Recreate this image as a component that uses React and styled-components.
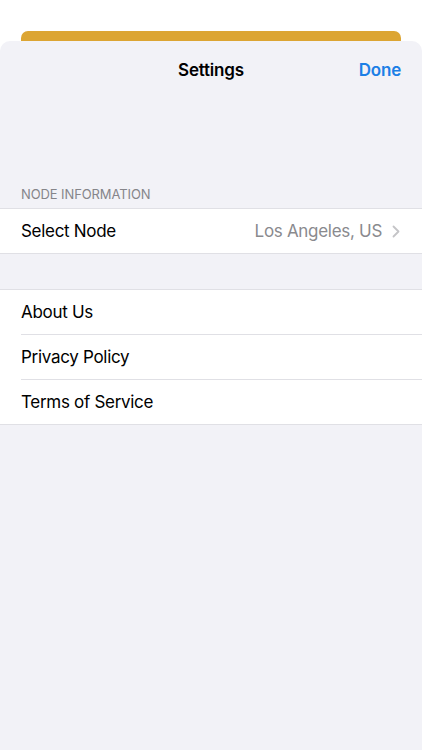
import React from 'react';
import styled, { createGlobalStyle } from 'styled-components';

const GlobalStyle = createGlobalStyle`
    html, body {
        margin: 0;
        padding: 0;
        background: #ffffff;
        font-family: Inter, "Liberation Sans", sans-serif;
        -webkit-font-smoothing: antialiased;
    }
`;

const Page = styled.div`
    width: 422px;
    height: 750px;
    padding-top: 31px;
    box-sizing: border-box;
    display: flex;
    flex-direction: column;
    overflow: hidden;
    background: #ffffff;
`;

const BackCard = styled.div`
    height: 10px;
    margin: 0 21px;
    background: #dca533;
    border-radius: 7px 7px 0 0;
    flex-shrink: 0;
`;

const Sheet = styled.div`
    flex: 1;
    background: #f2f2f7;
    border-radius: 10px 10px 0 0;
    display: flex;
    flex-direction: column;
`;

const NavBar = styled.div`
    height: 58px;
    display: grid;
    grid-template-columns: 1fr auto 1fr;
    align-items: center;
    padding: 0 21px;
`;

const Title = styled.div`
    grid-column: 2;
    font-size: 17px;
    font-weight: 600;
    color: #000;
    letter-spacing: -0.2px;
`;

const DoneButton = styled.button`
    grid-column: 3;
    justify-self: end;
    border: none;
    background: none;
    padding: 0;
    font-family: inherit;
    font-size: 17px;
    font-weight: 600;
    color: #1c7fe6;
    letter-spacing: -0.2px;
`;

const SectionHeader = styled.div`
    margin-top: ${(props) => props.mt || '0px'};
    padding: 0 21px 6px;
    font-size: 13px;
    color: #85858a;
    letter-spacing: -0.1px;
`;

const Group = styled.div`
    margin-top: ${(props) => props.mt || '0px'};
    background: #ffffff;
    border-top: 1px solid #e0e0e5;
    border-bottom: 1px solid #e0e0e5;
`;

const Row = styled.div`
    height: 44px;
    margin-left: 21px;
    padding-right: 22px;
    display: flex;
    align-items: center;
    justify-content: space-between;
    border-top: ${(props) => (props.first ? 'none' : '1px solid #e0e0e5')};
    font-size: 17px;
    color: #000;
    letter-spacing: -0.3px;
`;

const Detail = styled.span`
    display: inline-flex;
    align-items: center;
    gap: 10px;
    color: #8a8a8e;
`;

const Chevron = () => (
    <svg width='8' height='13' viewBox='0 0 8 13' fill='none'>
        <path d='M1.5 1.5L6.5 6.5L1.5 11.5' stroke='#c4c4c7' strokeWidth='1.8' strokeLinecap='round' strokeLinejoin='round' />
    </svg>
);

const links = ['About Us', 'Privacy Policy', 'Terms of Service'];

const App = () => {
    return (
        <>
            <GlobalStyle />
            <Page>
                <BackCard />
                <Sheet>
                    <NavBar>
                        <Title>Settings</Title>
                        <DoneButton>Done</DoneButton>
                    </NavBar>
                    <SectionHeader mt='87px'>NODE INFORMATION</SectionHeader>
                    <Group>
                        <Row first>
                            <span>Select Node</span>
                            <Detail>
                                Los Angeles, US
                                <Chevron />
                            </Detail>
                        </Row>
                    </Group>
                    <Group mt='35px'>
                        {links.map((label, i) => (
                            <Row key={label} first={i === 0}>
                                {label}
                            </Row>
                        ))}
                    </Group>
                </Sheet>
            </Page>
        </>
    );
};

export default App;
